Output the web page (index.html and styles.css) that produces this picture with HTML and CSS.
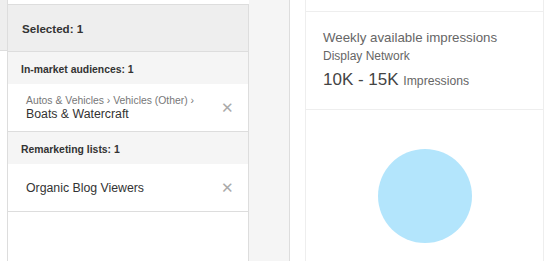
FILE: index.html
```html
<!DOCTYPE html>
<html>
<head>
<meta charset="utf-8">
<link rel="stylesheet" href="styles.css">
</head>
<body>
<div class="page">
  <div class="strip"><div class="strip-top"></div></div>
  <div class="selected">
    <div class="sel-head">Selected: 1</div>
    <div class="group-head">In-market audiences: 1</div>
    <div class="item">
      <div class="item-text">
        <div class="crumb">Autos &amp; Vehicles › Vehicles (Other) ›</div>
        <div class="name">Boats &amp; Watercraft</div>
      </div>
      <span class="close">✕</span>
    </div>
    <div class="group-head">Remarketing lists: 1</div>
    <div class="item">
      <div class="item-text">
        <div class="name">Organic Blog Viewers</div>
      </div>
      <span class="close">✕</span>
    </div>
  </div>
  <div class="gutter"></div>
  <div class="gap"></div>
  <div class="side">
    <div class="card-top"></div>
    <div class="card-stats">
      <div class="stat-title">Weekly available impressions</div>
      <div class="stat-sub">Display Network</div>
      <div class="stat-value">10K - 15K <span class="stat-unit">Impressions</span></div>
    </div>
    <div class="card-chart">
      <div class="bubble"></div>
    </div>
  </div>
</div>
</body>
</html>
```

FILE: styles.css
```css
html, body {
  margin: 0;
  padding: 0;
  background: #fff;
  font-family: "Liberation Sans", Arial, sans-serif;
}
.page {
  display: flex;
  height: 261px;
  overflow: hidden;
}
.strip {
  width: 7px;
  border-right: 1px solid #ddd;
  flex: none;
}
.strip-top {
  height: 50px;
  background: #eee;
  border-bottom: 1px solid #ddd;
}
.selected {
  width: 240px;
  flex: none;
  margin-top: 4px;
  border-top: 1px solid #ddd;
  border-right: 1px solid #ddd;
}
.sel-head {
  height: 47px;
  box-sizing: border-box;
  background: #eee;
  border-bottom: 1px solid #ddd;
  display: flex;
  align-items: center;
  padding-left: 14px;
  font-size: 11.6px;
  font-weight: bold;
  color: #333;
  padding-top: 1px;
}
.group-head {
  height: 32px;
  box-sizing: border-box;
  background: #f5f5f5;
  display: flex;
  align-items: center;
  padding-left: 13px;
  padding-top: 2px;
  font-size: 10.4px;
  font-weight: bold;
  color: #333;
}
.item {
  height: 48px;
  box-sizing: border-box;
  border-bottom: 1px solid #ddd;
  display: flex;
  align-items: center;
  padding-left: 18px;
  padding-right: 14px;
}
.item-text {
  flex: 1;
}
.crumb {
  font-size: 10.4px;
  color: #777;
  line-height: 12px;
}
.name {
  font-size: 12.3px;
  color: #333;
  line-height: 14px;
}
.close {
  font-size: 15px;
  color: #aaa;
  line-height: 1;
}
.gutter {
  width: 40px;
  flex: none;
  background: #f5f5f5;
  border-right: 1px solid #ddd;
}
.gap {
  width: 15px;
  flex: none;
}
.side {
  width: 237px;
  flex: none;
  border-left: 1px solid #eee;
  border-right: 1px solid #eee;
}
.card-top {
  height: 11px;
  border-bottom: 1px solid #eee;
}
.card-stats {
  height: 98px;
  box-sizing: border-box;
  border-bottom: 1px solid #eee;
  padding: 17px 0 0 17px;
  color: #666;
}
.stat-title {
  font-size: 13.3px;
  line-height: 18px;
}
.stat-sub {
  font-size: 12px;
  line-height: 18px;
}
.stat-value {
  font-size: 17px;
  color: #444;
  margin-top: 5px;
}
.stat-unit {
  font-size: 12.2px;
  color: #666;
}
.card-chart {
  display: flex;
  justify-content: center;
  padding-top: 39px;
}
.bubble {
  width: 94px;
  height: 94px;
  border-radius: 50%;
  background: #b3e5fc;
}
```
